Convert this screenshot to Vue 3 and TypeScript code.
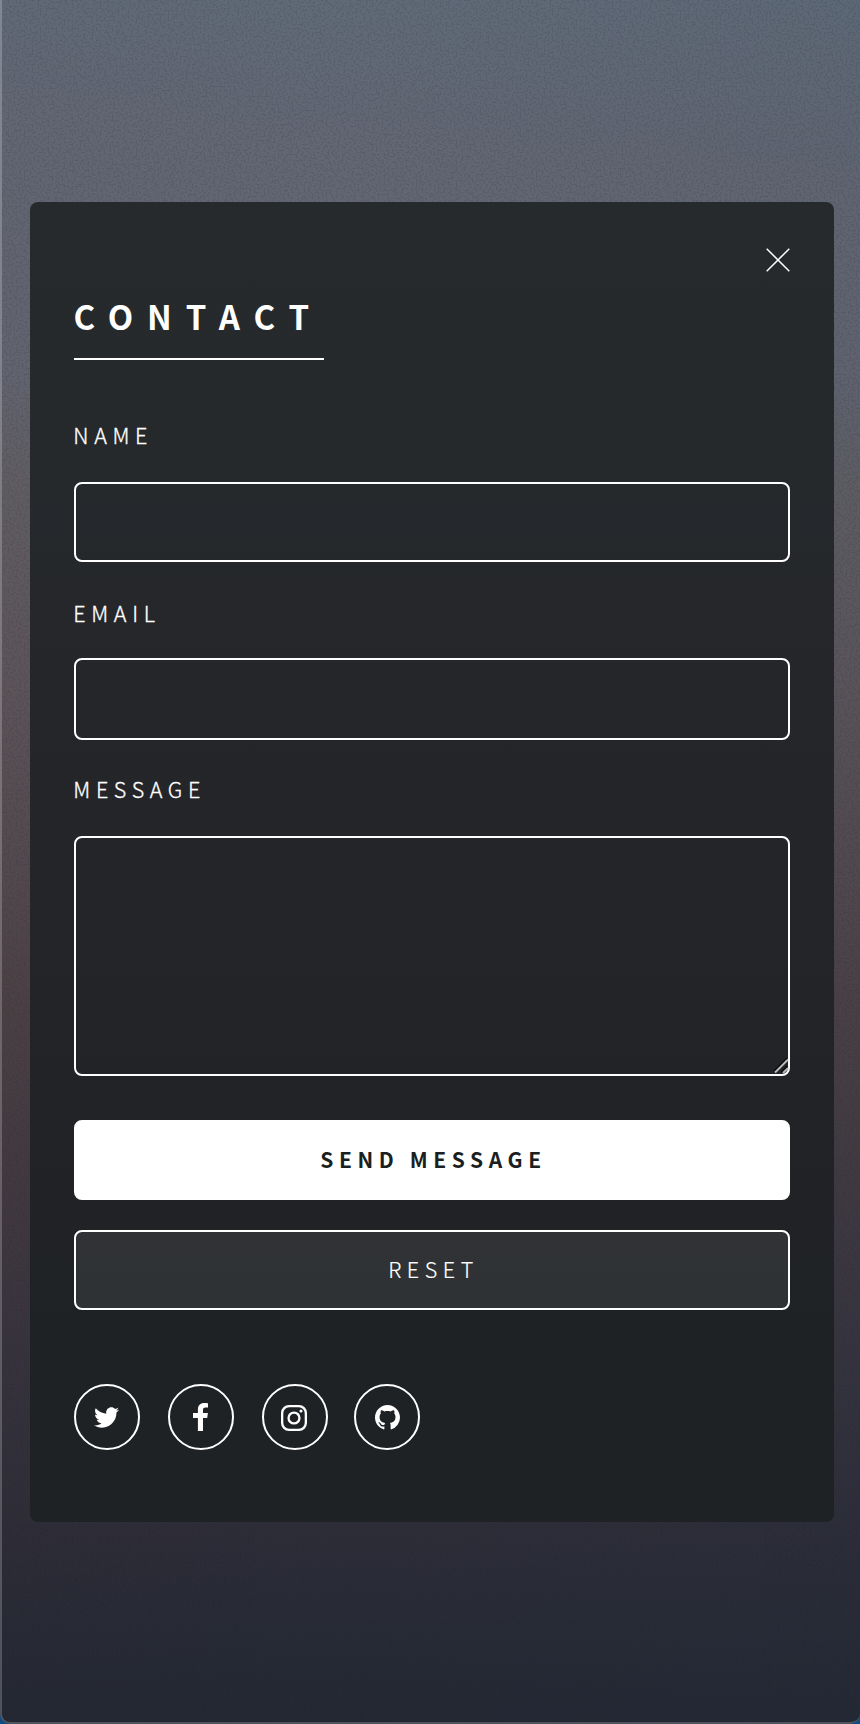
<script setup lang="ts">
import { ref } from 'vue'

interface SocialLink {
  label: string
  viewBox: string
  path: string
  kind: string
}

const name = ref('')
const email = ref('')
const message = ref('')

const links: SocialLink[] = [
  {
    label: 'Twitter',
    kind: 'twitter',
    viewBox: '0 48 512 416',
    path: 'M459.37 151.716c.325 4.548.325 9.097.325 13.645 0 138.72-105.583 298.558-298.558 298.558-59.452 0-114.68-17.219-161.137-47.106 8.447.974 16.568 1.299 25.34 1.299 49.055 0 94.213-16.568 130.274-44.832-46.132-.975-84.792-31.188-98.112-72.772 6.498.974 12.995 1.624 19.818 1.624 9.421 0 18.843-1.3 27.614-3.573-48.081-9.747-84.143-51.98-84.143-102.985v-1.299c13.969 7.797 30.214 12.67 47.431 13.319-28.264-18.843-46.781-51.005-46.781-87.391 0-19.492 5.197-37.36 14.294-52.954 51.655 63.675 129.3 105.258 216.365 109.807-1.624-7.797-2.599-15.918-2.599-24.04 0-57.828 46.782-104.934 104.934-104.934 30.213 0 57.502 12.67 76.67 33.137 23.715-4.548 46.456-13.32 66.599-25.34-7.798 24.366-24.366 44.833-46.132 57.827 21.117-2.273 41.584-8.122 60.426-16.243-14.292 20.791-32.161 39.308-52.628 54.253z',
  },
  {
    label: 'Facebook',
    kind: 'facebook',
    viewBox: '0 0 15 28',
    path: 'M15 .2v4.4h-2.6c-2 0-2.4 1-2.4 2.4v3.1h4.9l-.7 4.9H10V28H4.900V15H0v-4.900h4.900V6.500C4.900 2.300 7.400 0 11.200 0c1.800 0 3.300.1 3.800.2z',
  },
  {
    label: 'Instagram',
    kind: 'instagram',
    viewBox: '0 0 26 26',
    path: 'M8 0h10a8 8 0 0 1 8 8v10a8 8 0 0 1-8 8H8a8 8 0 0 1-8-8V8a8 8 0 0 1 8-8zM8.200 2.300a5.900 5.900 0 0 0-5.900 5.900v9.600a5.900 5.900 0 0 0 5.900 5.900h9.600a5.900 5.900 0 0 0 5.900-5.900V8.200a5.900 5.900 0 0 0-5.900-5.900zM13 6.400a6.600 6.600 0 1 1 0 13.200 6.600 6.600 0 0 1 0-13.200zm0 2.300a4.300 4.300 0 1 0 0 8.600 4.300 4.300 0 0 0 0-8.600zM20 4.500a1.550 1.550 0 1 1 0 3.100 1.550 1.550 0 0 1 0-3.100z',
  },
  {
    label: 'GitHub',
    kind: 'github',
    viewBox: '0 0 16 16',
    path: 'M8 0C3.58 0 0 3.58 0 8c0 3.54 2.29 6.53 5.47 7.59.4.07.55-.17.55-.38 0-.19-.01-.82-.01-1.49-2.01.37-2.53-.49-2.69-.94-.09-.23-.48-.94-.82-1.13-.28-.15-.68-.52-.01-.53.63-.01 1.08.58 1.23.82.72 1.21 1.87.87 2.33.66.07-.52.28-.87.51-1.07-1.78-.2-3.64-.89-3.64-3.95 0-.87.31-1.59.82-2.15-.08-.2-.36-1.02.08-2.12 0 0 .67-.21 2.2.82.64-.18 1.32-.27 2-.27s1.36.09 2 .27c1.53-1.04 2.2-.82 2.2-.82.44 1.1.16 1.92.08 2.12.51.56.82 1.27.82 2.15 0 3.07-1.87 3.75-3.65 3.95.29.25.54.73.54 1.48 0 1.07-.01 1.93-.01 2.2 0 .21.15.46.55.38A8.01 8.01 0 0016 8c0-4.42-3.58-8-8-8z',
  },
]

function reset(): void {
  name.value = ''
  email.value = ''
  message.value = ''
}
</script>

<template>
  <div class="backdrop">
    <main class="page">
      <svg class="grain" aria-hidden="true">
        <filter id="grain" x="0" y="0" width="100%" height="100%" color-interpolation-filters="sRGB">
          <feTurbulence type="fractalNoise" baseFrequency="0.5" numOctaves="2" seed="4" />
          <feColorMatrix values="0 0 0 0 0.16  0 0 0 0 0.12  0 0 0 0 0.18  8 0 0 0 -3.8" />
        </filter>
        <rect width="100%" height="100%" filter="url(#grain)" />
      </svg>
      <article class="card">
        <button class="close" type="button" aria-label="Close">
          <svg viewBox="0 0 24 24"><path d="M.7.7l22.600 22.600M23.300.7L.7 23.300" /></svg>
        </button>
        <h2>Contact</h2>
        <form @submit.prevent @reset.prevent="reset">
          <label for="name">Name</label>
          <input id="name" v-model="name" type="text" />
          <label class="email-label" for="email">Email</label>
          <input id="email" v-model="email" class="email" type="email" />
          <label class="message-label" for="message">Message</label>
          <div class="area">
            <textarea id="message" v-model="message"></textarea>
            <svg class="grip" viewBox="0 0 16 16" aria-hidden="true">
              <path class="shade" d="M1 13.500L14 .5M8.500 14.500l6-6" />
              <path class="line" d="M2 14.500L15 1.500M10 15l5-5" />
            </svg>
          </div>
          <button class="button primary" type="submit">Send Message</button>
          <button class="button" type="reset">Reset</button>
        </form>
        <nav class="icons">
          <a v-for="link in links" :key="link.label" href="#" :aria-label="link.label">
            <svg :class="link.kind" :viewBox="link.viewBox"><path fill-rule="evenodd" :d="link.path" /></svg>
          </a>
        </nav>
      </article>
    </main>
  </div>
</template>

<style>
body {
  margin: 0;
}
</style>

<style scoped>
* {
  box-sizing: border-box;
}
.backdrop {
  background: #104b82;
}
.page {
  position: relative;
  height: 1724px;
  padding: 202px 26px 0 28px;
  overflow: hidden;
  border-left: 2px solid rgba(255, 255, 255, 0.2);
  border-bottom: 2px solid rgba(255, 255, 255, 0.2);
  border-radius: 0 0 10px 10px;
  color: #fff;
  font-family: 'Noto Sans CJK SC', 'Noto Sans', sans-serif;
  font-weight: 300;
  background:
    linear-gradient(90deg, rgba(90, 40, 40, 0.02), transparent 40%, rgba(30, 60, 80, 0.05)),
    linear-gradient(#606b78 0, #626773 180px, #626571 370px, #605f64 480px, #5c565b 680px, #52494e 880px, #4b4145 1000px, #403940 1200px, #35333d 1370px, #2d2d38 1530px, #272b36 1630px, #232833 1724px);
  background-origin: border-box;
}
.grain {
  position: absolute;
  inset: 0;
  width: 100%;
  height: 100%;
  opacity: 0.12;
}
.card {
  position: relative;
  height: 1320px;
  padding: 96px 44px 0;
  border-radius: 8px;
  background: linear-gradient(#262a2d, #25292c 20%, #25262a 36%, #242528 52%, #222326 68%, #1f2224 85%, #1e2224);
}
.close {
  position: absolute;
  top: 46px;
  right: 44px;
  width: 24px;
  height: 24px;
  padding: 0;
  border: 0;
  background: none;
}
.close svg {
  display: block;
  fill: none;
  stroke: #fff;
  stroke-width: 1.5;
}
h2 {
  width: 250px;
  height: 64px;
  margin: -2px 0 55px;
  border-bottom: 2px solid #fff;
  font-size: 33px;
  font-weight: 700;
  line-height: 40px;
  letter-spacing: 13.9px;
  text-indent: -0.5px;
  text-transform: uppercase;
  white-space: nowrap;
}
label {
  display: block;
  height: 40px;
  margin-bottom: 27px;
  font-size: 21.5px;
  line-height: 40px;
  letter-spacing: 5.65px;
  text-indent: -0.7px;
  text-transform: uppercase;
  -webkit-text-stroke: 0.3px #fff;
}
.email-label {
  margin-top: 31px;
  margin-bottom: 25px;
}
.message-label {
  margin-top: 29px;
}
input,
textarea {
  display: block;
  width: 100%;
  height: 80px;
  padding: 0 28px;
  border: 2px solid #fff;
  border-radius: 8px;
  background: transparent;
  color: inherit;
  font: inherit;
  font-size: 24px;
  outline: 0;
}
.email {
  height: 82px;
}
.area {
  position: relative;
  margin-bottom: 44px;
}
textarea {
  height: 240px;
  padding: 20px 28px;
  resize: none;
}
.grip {
  position: absolute;
  right: 1px;
  bottom: 2px;
  width: 16px;
  height: 16px;
}
.grip path {
  fill: none;
  stroke-width: 2;
}
.grip .shade {
  stroke: #08090a;
}
.grip .line {
  stroke: #b9b9b9;
}
.button {
  display: block;
  width: 100%;
  height: 80px;
  margin-bottom: 30px;
  padding: 0 0 3px 3px;
  border: 2px solid #fff;
  border-radius: 8px;
  background: rgba(255, 255, 255, 0.075);
  color: #fff;
  font: inherit;
  font-size: 21.5px;
  letter-spacing: 5.6px;
  text-transform: uppercase;
  -webkit-text-stroke: 0.2px #fff;
}
.primary {
  background: #fff;
  color: #1b1f22;
  font-size: 21px;
  font-weight: 700;
  letter-spacing: 5.6px;
  -webkit-text-stroke: 0;
}
.icons {
  display: flex;
  gap: 28px;
  margin-top: 74px;
}
.icons a {
  display: flex;
  align-items: center;
  justify-content: center;
  width: 66px;
  height: 66px;
  padding: 1px 1px 0 0;
  border: 2px solid #fff;
  border-radius: 50%;
}
.icons a:nth-child(2) {
  padding: 0 1px 1px 0;
}
.icons a:nth-child(3) {
  padding-right: 2px;
}
.icons a:last-child {
  margin-left: -2px;
  padding: 1px 0 0 1px;
}
.icons svg {
  width: 26px;
  height: 26px;
  fill: #fff;
}
.icons .twitter {
  width: 25px;
  height: 21px;
}
.icons .facebook {
  width: 15px;
  height: 28px;
}
.icons .github {
  width: 25px;
  height: 25px;
}
</style>
